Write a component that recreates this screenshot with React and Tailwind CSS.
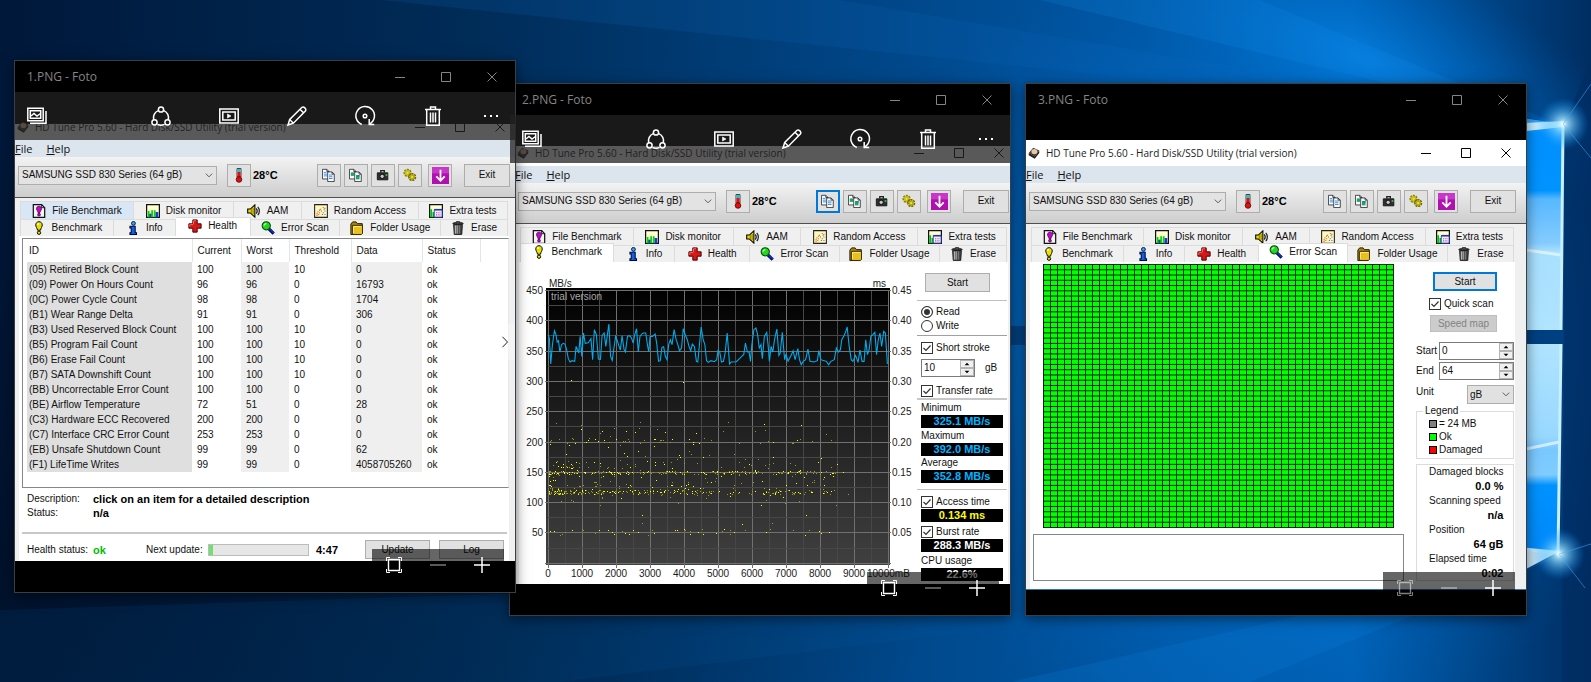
import clsx from "clsx";

const HEALTH = [
  ["(05) Retired Block Count", 100, 100, 10, 0],
  ["(09) Power On Hours Count", 96, 96, 0, 16793],
  ["(0C) Power Cycle Count", 98, 98, 0, 1704],
  ["(B1) Wear Range Delta", 91, 91, 0, 306],
  ["(B3) Used Reserved Block Count", 100, 100, 10, 0],
  ["(B5) Program Fail Count", 100, 100, 10, 0],
  ["(B6) Erase Fail Count", 100, 100, 10, 0],
  ["(B7) SATA Downshift Count", 100, 100, 10, 0],
  ["(BB) Uncorrectable Error Count", 100, 100, 0, 0],
  ["(BE) Airflow Temperature", 72, 51, 0, 28],
  ["(C3) Hardware ECC Recovered", 200, 200, 0, 0],
  ["(C7) Interface CRC Error Count", 253, 253, 0, 0],
  ["(EB) Unsafe Shutdown Count", 99, 99, 0, 62],
  ["(F1) LifeTime Writes", 99, 99, 0, 4058705260],
];

// x, y pairs of the read speed curve, three units to the pixel
const SPEED =
  "143,210 147,220 151,298 156,240 162,198 166,208 170,232 174,228 178,262 183,240 188,236 193,238 198,255 203,282 208,292 214,288 222,290 226,245 230,255 234,265 238,215 243,275 248,205 253,236 262,234 266,228 270,222 275,285 280,195 286,210 292,283 298,284 303,212 309,205 314,245 318,215 323,178 328,275 333,287 338,250 343,215 348,228 353,245 357,256 362,213 368,255 372,262 378,215 384,213 390,220 395,235 399,212 405,192 410,262 415,215 420,208 425,205 432,205 437,240 441,262 445,215 452,215 460,208 465,240 470,290 475,288 480,248 485,246 490,275 495,285 500,240 505,225 510,240 516,195 522,225 527,240 532,258 538,250 543,192 549,210 555,225 560,245 565,258 570,238 576,245 582,290 586,292 591,240 596,187 602,225 607,240 612,288 617,293 625,288 635,291 642,285 646,257 651,262 656,292 662,290 667,265 673,205 680,298 685,292 700,291 708,283 716,275 722,270 727,235 733,262 738,262 742,290 746,240 752,195 758,190 763,210 768,250 773,240 777,282 783,215 790,203 794,240 798,290 803,245 808,262 813,225 820,193 826,272 830,265 836,203 843,285 847,268 853,290 858,280 863,270 868,258 874,285 882,252 887,285 892,300 898,290 905,285 912,253 918,290 930,292 940,288 944,258 950,285 960,288 967,290 973,300 980,290 990,285 996,250 1002,262 1008,255 1012,225 1018,215 1024,200 1028,187 1034,245 1040,285 1045,290 1053,272 1060,293 1066,256 1072,290 1078,290 1083,225 1088,270 1093,255 1098,215 1104,210 1110,203 1115,270 1120,225 1125,205 1130,245 1136,200 1141,205 1147,298";

function makeDots() {
  let seed = 11;
  const rnd = () => {
    seed = (seed * 16807) % 2147483647;
    return seed / 2147483647;
  };
  // [count, top, height, how strongly the dots gather on the left]
  const bands = [
    [190, 209, 3, 1.5],
    [60, 199, 9, 1.6],
    [230, 228, 4, 1.5],
    [40, 222, 6, 1.6],
    [45, 267, 6, 1.2],
    [55, 158, 40, 1.3],
    [40, 176, 6, 1.6],
    [50, 212, 14, 1.4],
    [22, 232, 12, 1],
    [6, 246, 22, 1],
  ];
  const dots = [];
  for (const [n, top, h, pull] of bands) {
    for (let i = 0; i < n; i++) {
      dots.push([
        Math.round(30 + Math.pow(rnd(), pull) * 310 * (rnd() > 0.03 ? 0.93 : 1.05)),
        Math.round(top + rnd() * h),
        rnd() > 0.6,
      ]);
    }
  }
  dots.push([52, 118, true], [164, 120, true]);
  return dots;
}
const DOTS = makeDots();

const SANS = "font-['Liberation_Sans',Arial,sans-serif]";
const SEGOE = "font-['Open_Sans','Noto_Sans',sans-serif]";
const BUTTON = "border border-[#adadad] bg-[#e1e1e1]";

/* ---------- small drawings ---------- */

function Glyph({ children, className = "size-3.5", box = 16 }) {
  return (
    <svg viewBox={`0 0 ${box} ${box}`} className={clsx("shrink-0", className)} aria-hidden="true">
      {children}
    </svg>
  );
}

const ICONS = {
  file: (
    <>
      <path d="M1.5 .7h9.5l3.5 3.5v11.1h-13Z" fill="#f4f4f4" stroke="#111" strokeWidth="1.4" />
      <path d="M11 .7v3.5h3.5" fill="none" stroke="#111" />
      <path d="M8 2.5c1.7 0 2.9 1.2 2.9 2.8S9.5 7.5 9.2 9.7H6.8C6.5 7.5 5.1 6.9 5.1 5.3S6.3 2.5 8 2.5Z" fill="#d000d0" stroke="#300030" strokeWidth=".8" />
      <circle cx="8" cy="12.2" r="1.6" fill="#d000d0" stroke="#300030" strokeWidth=".8" />
    </>
  ),
  disk: (
    <>
      <path d="M.7 .7h14.6v14.6H.7Z" fill="#ffffd0" stroke="#111" strokeWidth="1.4" />
      <path d="M2 15V8h2v3h2V7h2v8ZM9 15V7h2v8Z" fill="#00d800" />
      <path d="M4 15v-4h2v4ZM11 15V9h3v6Z" fill="#1838e8" />
    </>
  ),
  aam: (
    <>
      <path d="M.8 5.8h3L9 1v14l-5.2-4.8h-3Z" fill="#e8d800" stroke="#000" strokeWidth="1.2" />
      <path d="M5 6v4M7 4.5v7" stroke="#807000" />
      <path d="M10.5 5c1.3 1.6 1.3 4.4 0 6M12.3 3.2c2.4 2.6 2.4 7 0 9.6" fill="none" stroke="#222" strokeWidth="1.4" />
    </>
  ),
  random: (
    <>
      <path d="M.7 .7h14.6v14.6H.7Z" fill="#fff8b8" stroke="#222" strokeWidth="1.2" />
      <path d="M3 11h1M5 12h1M4 9h1M6 10h1M3 13h1M7 6h1M10 4h1M12 5h1" stroke="#e04010" strokeWidth="1.2" />
      <path d="M8 8h1M10 10h1M12 8h1M9 12h1M12 12h1M6 7h1M11 6h1" stroke="#3048e0" strokeWidth="1.2" />
    </>
  ),
  extra: (
    <>
      <path d="M.7 .7h14.6v14.6H.7Z" fill="#ffffd0" stroke="#111" strokeWidth="1.4" />
      <path d="M1.5 6h2v9h-2ZM4 9h2v6H4Z" fill="#00b820" />
      <path d="M6 6.5h9V15H6Z" fill="#f4f0ff" stroke="#2038b8" />
      <path d="M6 6.5h9" stroke="#2038b8" strokeWidth="1.8" />
      <path d="M8 10h5M8 12.5h5" stroke="#c03878" strokeDasharray="1 1" strokeWidth="1.3" />
    </>
  ),
  bench: (
    <>
      <path d="M8 .8c2.2 0 3.7 1.6 3.7 3.7 0 2.2-1.5 3.3-2 6H6.3c-.5-2.7-2-3.8-2-6C4.3 2.4 5.8 .8 8 .8Z" fill="#e8e000" stroke="#000" strokeWidth="1.1" />
      <path d="M6.2 4.2 7.6 2.6" stroke="#fff" strokeWidth="1.4" />
      <circle cx="8" cy="13.4" r="1.9" fill="#e8e000" stroke="#000" strokeWidth="1.1" />
    </>
  ),
  info: (
    <>
      <circle cx="8.5" cy="2.7" r="2.2" fill="#28a8f8" stroke="#000830" />
      <path d="M4.5 6h6v7.5H12v2H4.5v-2H6V8H4.5Z" fill="#1060e8" stroke="#000830" strokeWidth="1.2" />
    </>
  ),
  health: (
    <>
      <path d="M5.5 1h5v4.5H15v5h-4.5V15h-5v-4.5H1v-5h4.5Z" fill="#d81818" stroke="#480000" strokeWidth="1.1" />
      <path d="M6.3 5.8V2h3M2 9V6.4h4" fill="none" stroke="#ff7060" />
    </>
  ),
  scan: (
    <>
      <path d="m9 9 5.5 5.5" stroke="#000860" strokeWidth="3.6" />
      <path d="m9.5 9 5 5" stroke="#1030d0" strokeWidth="1.4" />
      <circle cx="6" cy="5.5" r="4.7" fill="#20d820" stroke="#064806" strokeWidth="1.2" />
      <path d="M3.5 5.5C3.5 4 4.5 3 6 3" fill="none" stroke="#c0ffc0" strokeWidth="1.2" />
    </>
  ),
  folder: (
    <>
      <path d="M1 3.5 3 1h4l1.5 2H14v11l-1.5 1.5H1Z" fill="#a88400" stroke="#201800" strokeWidth="1.1" />
      <path d="M3 5h11.3v9L13 15.4H3Z" fill="#e8c020" stroke="#302400" />
      <path d="M4 6.3h9M4 6v8" stroke="#ffec80" />
    </>
  ),
  erase: (
    <>
      <path d="M2 3.2 3 2h3V.8h4V2h3l1 1.2Z" fill="#555" stroke="#111" />
      <path d="M3 4h10l-.7 11.3H3.7Z" fill="#484848" stroke="#111" />
      <path d="M5 5v9.5M7 5v9.5" stroke="#c8c8c8" strokeWidth="1.1" />
      <path d="M9.5 5v9.5" stroke="#888" />
    </>
  ),
};

function Page({ x, y, children }) {
  return (
    <g transform={`translate(${x} ${y})`}>
      <path d="M.5 .5h5L8 3v8.5H.5Z" fill="#fff" stroke="#303038" />
      <path d="M5.5 .5V3H8" fill="none" stroke="#303038" />
      {children}
    </g>
  );
}

const TOOLS = [
  {
    label: "Copy text",
    art: (
      <>
        <Page x={0} y={1}><path d="M2 4h3M2 6h4M2 8h4" stroke="#2080e0" /></Page>
        <Page x={6} y={4}><path d="M2 4h4M2 6h4M2 8h4" stroke="#2080e0" /></Page>
      </>
    ),
  },
  {
    label: "Copy screenshot",
    art: (
      <>
        <Page x={0} y={1}><path d="M2 4h4v4H2Z" fill="#18a860" /></Page>
        <Page x={6} y={4}><path d="M2 4h4v5H2Z" fill="#18a860" /><path d="M4 4h2v2H4Z" fill="#2070d0" /></Page>
      </>
    ),
  },
  {
    label: "Save screenshot",
    art: (
      <>
        <path d="M5.5 5V3h4v2" fill="none" stroke="#222" strokeWidth="1.6" />
        <path d="M1.5 5.5h12v8h-12Z" fill="#303030" stroke="#111" />
        <circle cx="7" cy="9.5" r="2.5" fill="#c8c8c8" stroke="#000" />
        <path d="M11 7h2v2h-2Z" fill="#20d040" />
      </>
    ),
  },
  {
    label: "Options",
    art: (
      <>
        <circle cx="5.2" cy="5.5" r="3.2" fill="none" stroke="#8c8000" strokeWidth="3" strokeDasharray="2 .8" />
        <circle cx="5.2" cy="5.5" r="2.2" fill="#e8e060" stroke="#c8bc10" strokeWidth="1.8" />
        <circle cx="10.5" cy="10.3" r="3.2" fill="none" stroke="#706600" strokeWidth="3" strokeDasharray="2 .8" />
        <circle cx="10.5" cy="10.3" r="2.2" fill="#e8e060" stroke="#b8ac00" strokeWidth="1.8" />
      </>
    ),
  },
];

function Chevron() {
  return (
    <svg viewBox="0 0 10 6" className="pointer-events-none col-start-1 row-start-1 mr-1 w-2 justify-self-end" aria-hidden="true">
      <path d="m1 .8 4 4 4-4" fill="none" stroke="#555" strokeWidth="1.2" />
    </svg>
  );
}

function CaptionButtons({ cell, color }) {
  return (
    <div className={clsx("flex h-full items-stretch", color)}>
      {[
        ["Minimize", "M0 5.5h10"],
        ["Maximize", "M.5 .5h9v9h-9Z"],
        ["Close", "M.5 .5l9 9M9.5 .5l-9 9"],
      ].map(([label, d]) => (
        <button key={label} aria-label={label} className={clsx("grid place-items-center", cell)}>
          <svg viewBox="0 0 10 10" className="size-2.5 overflow-visible" aria-hidden="true">
            <path d={d} fill="none" stroke="currentColor" />
          </svg>
        </button>
      ))}
    </div>
  );
}

/* ---------- photo viewer ---------- */

const PHOTO_TOOLS = [
  ["Share", (
    <>
      <path d="M7.2 4.6a7.6 7.6 0 0 0-4.4 9.2M12.8 4.6a7.6 7.6 0 0 1 4.4 9.2M6.5 18.3a7.6 7.6 0 0 0 7 0" />
      <circle cx="10" cy="3.5" r="2.6" /><circle cx="3.5" cy="16.3" r="2.6" /><circle cx="16.5" cy="16.3" r="2.6" />
    </>
  )],
  ["Slide show", (
    <>
      <path d="M.8 3h18.4v14H.8ZM3.8 6h12.4v8H3.8Z" />
      <path d="m8.5 8 3.5 2-3.5 2Z" fill="currentColor" strokeWidth=".6" />
    </>
  )],
  ["Edit", <path key="e" d="m1 19 1.7-5.5L15 1.3c1.7-1.2 4.8 1.5 3.6 3.6L6.4 17.2ZM2.7 13.5l3.7 3.7M13 3.3 16.7 7" />],
  ["Rotate", (
    <>
      <path d="M6.8 18.5A9.3 9.3 0 1 1 14.8 17.9M14.2 13v5.5h5" />
      <circle cx="10" cy="10" r="1.8" />
    </>
  )],
  ["Delete", <path key="d" d="M2 3.5h16M7.5 3.5V1h5v2.5M3.7 3.5v15.7h12.6V3.5M7.5 6.5v10M10 6.5v10M12.5 6.5v10" />],
];

function PhotoBar() {
  return (
    <div className="absolute inset-x-0 top-[31px] z-10 flex h-12 items-center bg-[#212121]/75 text-white">
      <button aria-label="Collection" className="ml-1.5 grid w-8 place-items-center">
        <svg viewBox="0 0 20 20" className="size-5" fill="none" stroke="currentColor" strokeWidth="1.5" aria-hidden="true">
          <path d="M.8 2.3h15.4v12.4H.8ZM3.3 4.8h10.4v7.4H3.3ZM3 17.2h16V5" />
          <path d="m4 10 3-2.5 3 2.5 3.5-2.5" />
        </svg>
      </button>
      <div className="ml-auto flex">
        {PHOTO_TOOLS.map(([label, art]) => (
          <button key={label} aria-label={label} className="grid w-[68px] place-items-center">
            <svg viewBox="0 0 20 20" className="size-5 overflow-visible" fill="none" stroke="currentColor" strokeWidth="1.5" aria-hidden="true">
              {art}
            </svg>
          </button>
        ))}
        <button aria-label="See more" className="flex w-12 items-center justify-center gap-1">
          <span className="size-0.5 bg-white" />
          <span className="size-0.5 bg-white" />
          <span className="size-0.5 bg-white" />
        </button>
      </div>
    </div>
  );
}

function ZoomBar({ dimFit }) {
  return (
    <div className="absolute right-[11px] bottom-[11px] z-10 flex h-8 bg-black/60 text-white">
      <button aria-label="Zoom to fit" className={clsx("grid w-11 place-items-center", dimFit && "opacity-50")}>
        <svg viewBox="0 0 16 16" className="size-4" fill="none" stroke="currentColor" aria-hidden="true">
          <path d="M2.5 2.5h11v11h-11Z" strokeWidth="1.4" />
          <path d="M.5 4V.5H4M12 .5h3.5V4M15.5 12v3.5H12M4 15.5H.5V12" />
        </svg>
      </button>
      <button aria-label="Zoom out" className="grid w-11 place-items-center">
        <span className="h-0.5 w-4 bg-white/35" />
      </button>
      <button aria-label="Zoom in" className="grid w-11 place-items-center">
        <svg viewBox="0 0 16 16" className="size-4" stroke="currentColor" strokeWidth="1.5" aria-hidden="true">
          <path d="M0 8h16M8 0v16" />
        </svg>
      </button>
    </div>
  );
}

function PhotoWindow({ title, place, bars, dimFit, children }) {
  return (
    <section className={clsx("absolute flex h-[533px] w-[502px] flex-col border border-[#3a3f45] bg-black shadow-[0_3px_12px_rgba(0,0,0,0.5)]", place)}>
      <header className={clsx("flex h-[31px] shrink-0 items-center justify-between pl-3 text-[12px] text-[#858585]", SEGOE)}>
        <h1>{title}</h1>
        <CaptionButtons cell="w-[46px]" color="text-[#858585]" />
      </header>
      {bars && <PhotoBar />}
      {children}
      <ZoomBar dimFit={dimFit} />
    </section>
  );
}

/* ---------- HD Tune ---------- */

const ROW_1 = [
  ["file", "File Benchmark"],
  ["disk", "Disk monitor"],
  ["aam", "AAM"],
  ["random", "Random Access"],
  ["extra", "Extra tests"],
];
const ROW_2 = [
  ["bench", "Benchmark"],
  ["info", "Info"],
  ["health", "Health"],
  ["scan", "Error Scan"],
  ["folder", "Folder Usage"],
  ["erase", "Erase"],
];

function Tab({ icon, label, active, hot }) {
  return (
    <button
      role="tab"
      aria-selected={!!active}
      className={clsx(
        "flex items-center justify-center gap-1.5 border-t border-r border-[#dcdcdc] whitespace-nowrap",
        active && "relative -mt-0.5 bg-white pb-0.5",
        hot && "bg-[#d8e6f5]",
        !active && !hot && "bg-[#f0f0f0]",
      )}
    >
      <Glyph>{ICONS[icon]}</Glyph>
      <span className={SANS}>{label}</span>
    </button>
  );
}

function HdTune({ className, strip, selectWidth, active, hot, focusTool, children }) {
  return (
    <div className={clsx("flex flex-col bg-[#f0f0f0] text-[10px] leading-[14px] text-[#111]", SANS, className)}>
      <div className={clsx("flex shrink-0 flex-col justify-end bg-white", strip)}>
        <div className={clsx("flex h-[26px] shrink-0 items-center pr-(--edge) pl-0.5 text-[#222]", SEGOE)}>
          <Glyph className="size-3">
            <path d="m1 8 6-7 8 3.5-6 8Z" fill="#403830" />
            <path d="m1 8 8 4.5v3L1 11ZM9 12.5l6-8V8l-6 7.5Z" fill="#1c1c1c" />
            <ellipse cx="8.5" cy="6" rx="4" ry="3.5" fill="#e8c8a0" />
          </Glyph>
          <span className="grow pl-1.5">HD Tune Pro 5.60 - Hard Disk/SSD Utility (trial version)</span>
          <CaptionButtons cell="w-10" color="-mr-[10px] text-black" />
        </div>
      </div>

      <nav className={clsx("flex h-[17px] shrink-0 items-center gap-3.5 bg-[#dce4ed] text-[11px]", SEGOE)}>
        <button><u>F</u>ile</button>
        <button><u>H</u>elp</button>
      </nav>

      <div className="flex h-[41px] shrink-0 items-center border-b border-[#505050] bg-linear-to-b from-[#f3f3f3] to-[#cdcdcd] pr-(--edge) pb-1 pl-[3px]">
        <div className={clsx("grid h-[19px] items-center", selectWidth)}>
          <select aria-label="Drive" className={clsx("col-start-1 row-start-1 h-full w-full appearance-none border border-[#adadad] bg-[#e3e3e3] pl-[3px]", SANS)}>
            <option>SAMSUNG SSD 830 Series (64 gB)</option>
          </select>
          <Chevron />
        </div>
        <button aria-label="Temperature" className={clsx("ml-2.5 grid h-[23px] w-6 place-items-center", BUTTON)}>
          <Glyph className="size-4">
            <path d="M6 1.5h4V10H6Z" fill="#d8f8ff" stroke="#444" />
            <path d="M6.5 2h3v3h-3Z" fill="#28c0d0" />
            <path d="M6.5 5h3v6h-3Z" fill="#e01010" />
            <circle cx="8" cy="12.5" r="2.8" fill="#e01010" stroke="#500" strokeWidth=".8" />
          </Glyph>
        </button>
        <b className="ml-0.5 text-[11px] text-black">28°C</b>
        <div className="ml-auto flex gap-[3px]">
          {TOOLS.map((tool, i) => (
            <button
              key={tool.label}
              aria-label={tool.label}
              className={clsx(
                "grid h-[23px] w-6 place-items-center",
                focusTool === i ? "border-2 border-[#0078d7] bg-[#e1e1e1]" : BUTTON,
              )}
            >
              <Glyph className="size-3.5">{tool.art}</Glyph>
            </button>
          ))}
          <button aria-label="Tray" className={clsx("ml-[3px] grid h-[23px] w-6 place-items-center", BUTTON)}>
            <Glyph className="size-[17px]">
              <path d="M0 0h16v16H0Z" fill="#b010b0" />
              <path d="M0 0h16v6H0Z" fill="#c838c8" />
              <path d="M8 2.5v10M4 8.8l4 4 4-4" fill="none" stroke="#fff" strokeWidth="1.7" />
            </Glyph>
          </button>
          <button className={clsx("ml-[9px] h-[23px] w-[46px]", BUTTON, SANS)}>Exit</button>
        </div>
      </div>

      <div role="tablist" className="mt-[3px] mr-[calc(var(--edge)+2px)] ml-[5px] shrink-0">
        <div className="grid h-[18px] grid-cols-[113fr_100fr_68fr_117fr_89fr] border-l border-[#dcdcdc]">
          {ROW_1.map(([icon, label]) => (
            <Tab key={icon} icon={icon} label={label} hot={hot === icon} />
          ))}
        </div>
        <div className="grid h-[17px] grid-cols-[93fr_62fr_75fr_90fr_101fr_67fr] border-l border-[#dcdcdc]">
          {ROW_2.map(([icon, label]) => (
            <Tab key={icon} icon={icon} label={label} active={active === icon} />
          ))}
        </div>
      </div>

      <main className="mr-[calc(var(--edge)+1px)] ml-1 min-h-0 grow bg-white">{children}</main>
    </div>
  );
}

function Check({ label, className }) {
  return (
    <label className={clsx("flex h-3.5 items-center gap-[3px]", className)}>
      <span className="grid">
        <input type="checkbox" defaultChecked className="peer col-start-1 row-start-1 size-3 appearance-none border border-[#333] bg-white" />
        <svg viewBox="0 0 12 12" className="pointer-events-none invisible col-start-1 row-start-1 size-3 peer-checked:visible" aria-hidden="true">
          <path d="m2.5 6 2.5 2.5 4.5-5" fill="none" stroke="#333" strokeWidth="1.2" />
        </svg>
      </span>
      {label}
    </label>
  );
}

function Radio({ label, checked }) {
  return (
    <label className="flex h-3.5 items-center gap-[3px]">
      <input
        type="radio"
        name="mode"
        defaultChecked={checked}
        className="size-3 appearance-none rounded-full border border-[#333] bg-white checked:bg-[#333] checked:shadow-[inset_0_0_0_2px_#fff]"
      />
      {label}
    </label>
  );
}

function Spinner({ id, value, width }) {
  return (
    <div className={clsx("flex h-[18px] border border-[#7a7a7a] bg-white", width)}>
      <input id={id} aria-label={id} defaultValue={value} className="w-0 grow pl-0.5 outline-none" />
      <div className="grid w-3.5 grid-rows-2 bg-[#f0f0f0]">
        {["M0 4h6L3 1Z", "M0 1h6L3 4Z"].map((d, i) => (
          <button key={d} aria-label={i ? "Down" : "Up"} className="grid place-items-center border border-[#b4b4b4]">
            <svg viewBox="0 0 6 5" className="h-1 w-1.5" aria-hidden="true"><path d={d} /></svg>
          </button>
        ))}
      </div>
    </div>
  );
}

function HealthPage() {
  const shade = ["bg-[#dfdfdf] pl-0.5", "pl-[5px]", "bg-[#efefef] pl-[5px]", "pl-[5px]", "bg-[#efefef] pl-[5px]", "pl-[5px]"];
  return (
    <>
      <div className="mt-0.5 ml-[3px] h-[250px] border border-[#828790] border-r-[#e8e8e8] pl-1">
        <table className="w-[453px] table-fixed border-collapse">
          <colgroup>
            <col className="w-[165px]" />
            <col className="w-[49px]" />
            <col className="w-[48px]" />
            <col className="w-[62px]" />
            <col className="w-[71px]" />
            <col className="w-[58px]" />
          </colgroup>
          <thead>
            <tr className="h-[23px]">
              {["ID", "Current", "Worst", "Threshold", "Data", "Status"].map((h, i) => (
                <th key={h} className={clsx("border-r border-[#e5e5e5] text-left font-normal", i ? "pl-[5px]" : "pl-0.5")}>{h}</th>
              ))}
            </tr>
          </thead>
          <tbody>
            {HEALTH.map((row) => (
              <tr key={row[0]} className="h-[15px]">
                {[...row, "ok"].map((cell, i) => (
                  <td key={i} className={shade[i]}>{cell}</td>
                ))}
              </tr>
            ))}
          </tbody>
        </table>
      </div>
      <dl className="mt-1 grid grid-cols-[66px_1fr] pl-2">
        <dt>Description:</dt>
        <dd className="text-[11px] font-bold text-black">click on an item for a detailed description</dd>
        <dt>Status:</dt>
        <dd className="text-[11px] font-bold text-black">n/a</dd>
      </dl>
      <hr className="mt-3 mr-0.5 ml-[3px] border-t-2 border-[#c8c8c8]" />
      <div className="mt-1.5 flex h-[19px] items-center pr-[5px] pl-2 whitespace-nowrap">
        <span className="w-[66px]">Health status:</span>
        <b className="w-[53px] text-[11px] text-[#00c000]">ok</b>
        <span className="w-[62px]">Next update:</span>
        <div role="progressbar" aria-label="Next update" className="h-3 w-[101px] border border-[#bcbcbc] bg-[#e6e6e6]">
          <div className="h-full w-1 bg-[#70e070]" />
        </div>
        <b className="pl-[7px] text-[11px] text-black">4:47</b>
        <div className="ml-auto flex gap-[9px]">
          <button className={clsx("h-[19px] w-[65px]", BUTTON, SANS)}>Update</button>
          <button className={clsx("h-[19px] w-[65px]", BUTTON, SANS)}>Log</button>
        </div>
      </div>
    </>
  );
}

function Chart() {
  const steps = Array.from({ length: 21 }, (_, i) => i);
  const y = (i) => Math.round(28 + i * 15.15);
  return (
    <svg viewBox="0 0 398 322" className="h-[322px] w-[398px] shrink-0" fontSize="10" fill="#1a1a1a" role="img" aria-label="Transfer rate and access time">
      <defs>
        <linearGradient id="plot" x2="0" y2="1">
          <stop stopColor="#000" />
          <stop offset="1" stopColor="#404040" />
        </linearGradient>
      </defs>
      <rect x="27" y="26" width="344" height="277" fill="url(#plot)" />
      <g shapeRendering="crispEdges">
        {steps.map((i) => (
          <path key={i} d={`M${29 + i * 17}.5 28v${i % 2 ? 275 : 278}`} stroke={i % 2 ? "#474747" : "#707070"} />
        ))}
        {steps.slice(0, 19).map((i) => (
          <path key={i} d={`M${i % 2 ? 29 : 26} ${y(i)}.5H${i % 2 ? 369 : 372}`} stroke={i % 2 ? "#474747" : "#707070"} />
        ))}
        {DOTS.map(([dx, dy, hot], i) => (
          <rect key={i} x={dx} y={dy} width="1" height="1" fill={hot ? "#ffff00" : "#a09c10"} />
        ))}
      </g>
      <polyline
        points={SPEED}
        transform="translate(-19.3 2.7) scale(.338 .3333)"
        fill="none"
        stroke="#00acec"
        strokeWidth="3.2"
      />
      <text x="30" y="25">MB/s</text>
      <text x="367" y="25" textAnchor="end">ms</text>
      <text x="32" y="38" fill="#a8a8a8">trial version</text>
      {Array.from({ length: 9 }, (_, i) => (
        <g key={i}>
          <text x="24" y={y(i * 2) + 4} textAnchor="end">{450 - i * 50}</text>
          <text x="373" y={y(i * 2) + 4}>{(0.45 - i * 0.05).toFixed(2)}</text>
        </g>
      ))}
      {Array.from({ length: 10 }, (_, i) => (
        <text key={i} x={29 + i * 34} y="315" textAnchor="middle">{i * 1000}</text>
      ))}
      <text x="348" y="315">10000mB</text>
    </svg>
  );
}

function Reading({ children, color = "text-[#00b4ff]" }) {
  return (
    <output className={clsx("ml-1 block h-[13px] w-[82px] bg-black text-center text-[11px] leading-[13px] font-bold", color)}>
      {children}
    </output>
  );
}

function BenchmarkPage() {
  return (
    <div className="flex">
      <Chart />
      <div className="w-[90px] pt-[11px]">
        <button className={clsx("ml-2 h-[19px] w-[65px]", BUTTON, SANS)}>Start</button>
        <hr className="mt-2 mb-1 border-[#c0c0c0]" />
        <div className="pl-1">
          <Radio label="Read" checked />
          <Radio label="Write" />
        </div>
        <hr className="mt-0.5 mb-[5px] border-[#a0a0a0]" />
        <Check label="Short stroke" className="pl-1" />
        <div className="mt-1 mb-[7px] flex items-center gap-2.5 pl-1">
          <Spinner id="Stroke size" value="10" width="w-[54px]" />
          gB
        </div>
        <Check label="Transfer rate" className="pl-1" />
        <hr className="border-t-2 border-[#c8c8c8]" />
        <p className="mt-px pl-1">Minimum</p>
        <Reading>325.1 MB/s</Reading>
        <p className="mt-px pl-1">Maximum</p>
        <Reading>392.0 MB/s</Reading>
        <p className="pl-1">Average</p>
        <Reading>352.8 MB/s</Reading>
        <hr className="mt-1.5 mb-[5px] border-[#c0c0c0]" />
        <Check label="Access time" className="pl-1" />
        <Reading color="text-[#ffff00]">0.134 ms</Reading>
        <Check label="Burst rate" className="mt-[3px] pl-1" />
        <Reading color="text-white">288.3 MB/s</Reading>
        <p className="mt-0.5 pl-1">CPU usage</p>
        <Reading color="text-white">22.6%</Reading>
      </div>
    </div>
  );
}

function BlockMap() {
  const n = Array.from({ length: 51 }, (_, i) => i);
  return (
    <svg viewBox="0 0 351 264" className="h-[264px] w-[351px]" role="img" aria-label="Scanned blocks">
      <rect width="351" height="264" fill="#00ff00" />
      {n.map((i) => (
        <g key={i} stroke="#002400">
          <path d={`M${0.5 + i * 7} 0v264`} />
          <path d={`M0 ${0.5 + i * 5.26}h351`} />
        </g>
      ))}
    </svg>
  );
}

function ErrorScanPage() {
  const legend = [
    ["bg-[#808080]", "= 24 MB"],
    ["bg-[#00ff00]", "Ok"],
    ["bg-[#ff0000]", "Damaged"],
  ];
  const stats = [
    ["Damaged blocks", "0.0 %"],
    ["Scanning speed", "n/a"],
    ["Position", "64 gB"],
    ["Elapsed time", "0:02"],
  ];
  return (
    <div className="flex justify-between pr-px pl-[3px]">
      <div className="pt-0.5">
        <div className="pl-2.5">
          <BlockMap />
        </div>
        <textarea aria-label="Log" readOnly className="mt-1.5 block h-[47px] w-[371px] resize-none border border-[#828790] bg-white" />
      </div>
      <div className="w-[98px] pt-2.5">
        <button className={clsx("ml-[17px] block h-[19px] w-[64px] border-2 border-[#0078d7] bg-[#e1e1e1]", SANS)}>Start</button>
        <Check label="Quick scan" className="mt-1.5 ml-[13px]" />
        <button disabled className={clsx("mt-1 ml-3.5 block h-[17px] w-[67px] border border-[#bfbfbf] bg-[#cccccc] text-[#838383]", SANS)}>Speed map</button>
        <div className="mt-2.5 flex items-center justify-between">
          <label htmlFor="Start">Start</label>
          <Spinner id="Start" value="0" width="w-[75px]" />
        </div>
        <div className="mt-0.5 flex items-center justify-between">
          <label htmlFor="End">End</label>
          <Spinner id="End" value="64" width="w-[75px]" />
        </div>
        <div className="mt-[5px] flex justify-between">
          <label htmlFor="unit">Unit</label>
          <div className="grid h-[19px] w-[47px] items-center">
            <select id="unit" className={clsx("col-start-1 row-start-1 h-full w-full appearance-none pl-0.5", BUTTON, SANS)}>
              <option>gB</option>
            </select>
            <Chevron />
          </div>
        </div>
        <fieldset className="mt-px h-[54px] border border-[#dcdcdc] pl-3">
          <legend className="-ml-1.5 px-0.5 leading-[12px]">Legend</legend>
          {legend.map(([color, text]) => (
            <div key={text} className="flex h-[13px] items-center gap-0.5">
              <span className={clsx("size-2 border border-black", color)} />
              {text}
            </div>
          ))}
        </fieldset>
        <dl className="mt-[5px] grid gap-px border border-[#dcdcdc] pr-2.5 pl-3">
          {stats.map(([name, value]) => (
            <div key={name}>
              <dt className="whitespace-nowrap">{name}</dt>
              <dd className="text-right text-[11px] font-bold text-black">{value}</dd>
            </div>
          ))}
        </dl>
      </div>
    </div>
  );
}

function Wallpaper() {
  return (
    <svg viewBox="0 0 1591 682" preserveAspectRatio="none" className="absolute inset-0 size-full" aria-hidden="true">
      <defs>
        <linearGradient id="base">
          <stop stopColor="#00183a" />
          <stop offset=".3" stopColor="#002c58" />
          <stop offset=".62" stopColor="#004d94" />
          <stop offset=".85" stopColor="#0060b4" />
          <stop offset="1" stopColor="#002e62" />
        </linearGradient>
        <radialGradient id="dusk">
          <stop stopColor="#000c20" stopOpacity=".55" />
          <stop offset="1" stopColor="#000c20" stopOpacity="0" />
        </radialGradient>
        <radialGradient id="glow">
          <stop stopColor="#0a90f8" />
          <stop offset=".5" stopColor="#0078d8" stopOpacity=".6" />
          <stop offset="1" stopColor="#0060b8" stopOpacity="0" />
        </radialGradient>
        <radialGradient id="flare">
          <stop stopColor="#fff" />
          <stop offset=".2" stopColor="#a0e4ff" stopOpacity=".8" />
          <stop offset="1" stopColor="#0090ff" stopOpacity="0" />
        </radialGradient>
        <linearGradient id="upper" x2="0" y2="1">
          <stop stopColor="#48b4ff" />
          <stop offset=".1" stopColor="#0090ff" />
          <stop offset=".36" stopColor="#0094ff" />
          <stop offset=".4" stopColor="#58b8ff" />
          <stop offset=".6" stopColor="#84ccff" />
          <stop offset=".64" stopColor="#a8e0ff" />
          <stop offset="1" stopColor="#b0e4ff" />
        </linearGradient>
        <linearGradient id="lower" x2="0" y2="1">
          <stop stopColor="#b0e4ff" />
          <stop offset=".44" stopColor="#98d8ff" />
          <stop offset=".5" stopColor="#78c8ff" />
          <stop offset=".62" stopColor="#80ccff" />
          <stop offset=".67" stopColor="#0092ff" />
          <stop offset="1" stopColor="#0088f8" />
        </linearGradient>
      </defs>
      <rect width="1591" height="682" fill="url(#base)" />
      <ellipse cx="1260" cy="340" rx="400" ry="420" fill="url(#glow)" opacity=".8" />
      <ellipse cx="1370" cy="60" rx="280" ry="110" fill="url(#glow)" opacity=".55" transform="rotate(22 1370 60)" />
      <ellipse cx="0" cy="560" rx="950" ry="420" fill="url(#dusk)" />
      <path d="M380 0 1560 122 840 0Z" fill="#0a6cc0" opacity=".16" />
      <path d="M1040 0h220l300 125Z" fill="#1090f0" opacity=".18" />
      <path d="M0 610 1560 560 560 682H0Z" fill="#0060b0" opacity=".12" />
      <path d="M1011 682 1560 556 1250 682Z" fill="#0a80e0" opacity=".2" />
      <path d="M1565 122 1591 60V682h-29Z" fill="#002c60" opacity=".6" />
      <path d="M1000 326h563v19h-563Z" fill="#004080" />
      <path d="M1480 112 1564 124 1561 330H1480Z" fill="url(#upper)" />
      <path d="M1480 344H1561L1558 555 1480 545Z" fill="url(#lower)" />
      <path d="M1526 250l35 5M1526 449l33-7" stroke="#e4f6ff" strokeWidth="3" opacity=".8" />
      <path d="M1563 124 1561 330M1561 344 1558 555" stroke="#c8f0ff" strokeWidth="3" />
      <path d="M1500 124 1564 121 1563 127 1500 134ZM1500 545l60 6-34 18-26 4Z" fill="#d8f4ff" opacity=".9" />
      <circle cx="1563" cy="124" r="26" fill="url(#flare)" />
      <circle cx="1559" cy="554" r="26" fill="url(#flare)" />
      <path d="M1563 124 1591 84M1563 124l28 34M1559 554l32-10M1559 554l26 34" stroke="#40b0ff" opacity=".5" />
    </svg>
  );
}

export default function App() {
  return (
    <div className="relative min-h-screen overflow-hidden bg-[#00264f]">
      <Wallpaper />

      <PhotoWindow title="3.PNG - Foto" place="left-[1025px] top-[83px]" dimFit>
        <HdTune
          className="mt-[25px] h-[450px] border-b border-[#2878b8] [--edge:10px]"
          strip="h-[26px]"
          selectWidth="w-[197px]"
          active="scan"
        >
          <ErrorScanPage />
        </HdTune>
      </PhotoWindow>

      <PhotoWindow title="2.PNG - Foto" place="left-[509px] top-[83px]" bars>
        <HdTune
          className="mt-[31px] ml-[5px] h-[438px] [--edge:1px]"
          strip="h-5"
          selectWidth="w-[198px]"
          active="bench"
          focusTool={0}
        >
          <BenchmarkPage />
        </HdTune>
      </PhotoWindow>

      <PhotoWindow title="1.PNG - Foto" place="left-[14px] top-[60px]" bars>
        <HdTune
          className="mt-8 h-[437px] [--edge:5px]"
          strip="h-4"
          selectWidth="w-[199px]"
          active="health"
          hot="file"
        >
          <HealthPage />
        </HdTune>
        <button aria-label="Next" className="absolute top-[263px] right-0 z-10 grid h-9 w-5 place-items-center bg-white/30">
          <svg viewBox="0 0 8 12" className="h-3 w-2" aria-hidden="true">
            <path d="m1.5 .8 5 5.2-5 5.2" fill="none" stroke="#222" />
          </svg>
        </button>
      </PhotoWindow>
    </div>
  );
}
